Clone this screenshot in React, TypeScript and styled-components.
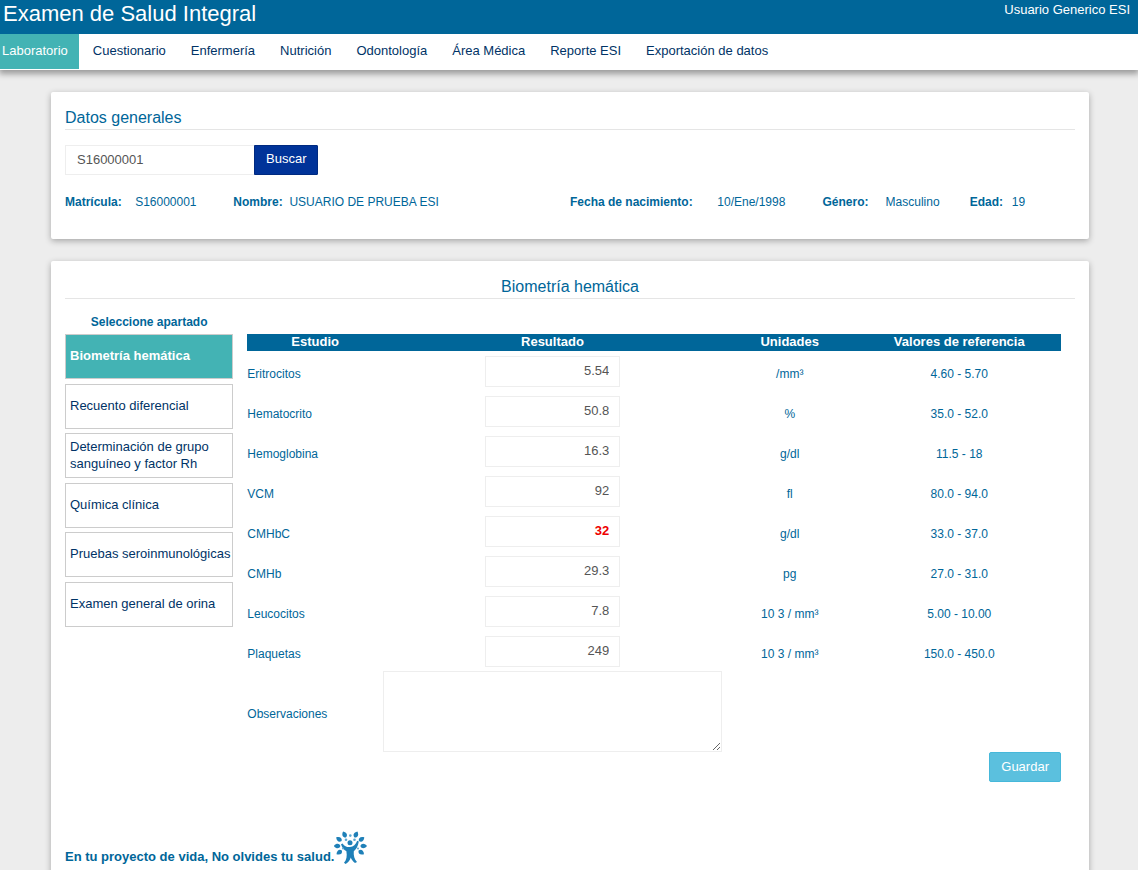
import React from 'react';
import styled, { createGlobalStyle } from 'styled-components';

const GlobalStyle = createGlobalStyle`
  *, *::before, *::after { box-sizing: border-box; }
  body {
    margin: 0;
    background: #ededed;
    color: #006699;
    font-family: Arial, "Liberation Sans", sans-serif;
    font-size: 12px;
    line-height: 17px;
  }
  button, input, textarea { font: inherit; }
`;

const Header = styled.header`
  position: relative;
  z-index: 1;
  display: flex;
  justify-content: space-between;
  height: 34px;
  padding: 0 8px 0 3px;
  background: #006699;
  color: #fff;
`;

const SiteTitle = styled.h1`
  margin: 0;
  font-size: 22px;
  font-weight: 400;
  line-height: 28px;
`;

const UserName = styled.span`
  font-size: 13px;
  line-height: 20px;
`;

const Nav = styled.nav`
  display: flex;
  height: 36px;
  background: #fff;
  box-shadow: 0 3px 6px 1px rgba(0, 0, 0, 0.35);
`;

const NavLink = styled.a<{ $active?: boolean }>`
  height: 35px;
  padding: 0 11px 0 ${p => (p.$active ? 2 : 14)}px;
  background: ${p => (p.$active ? '#43b3b4' : 'transparent')};
  color: ${p => (p.$active ? '#fff' : '#003366')};
  font-size: 13px;
  line-height: 34px;
  text-decoration: none;
  white-space: nowrap;
`;

const Main = styled.main`
  display: flex;
  flex-direction: column;
  gap: 22px;
  padding: 22px 49px 22px 51px;
`;

const Card = styled.section`
  padding: 14px 14px 28px;
  background: #fff;
  border-radius: 2px;
  box-shadow: 0 2px 6px rgba(0, 0, 0, 0.3);
`;

const CardTitle = styled.h2<{ $centered?: boolean }>`
  margin: 0 0 15px;
  padding-top: 1px;
  border-bottom: 1px solid #e5e5e5;
  font-size: 16px;
  font-weight: 400;
  line-height: 22px;
  text-align: ${p => (p.$centered ? 'center' : 'left')};
`;

const SearchForm = styled.form`
  display: flex;
  height: 30px;
  margin-bottom: 19px;
`;

const SearchInput = styled.input`
  width: 189px;
  padding: 0 11px 2px;
  border: 1px solid #eee;
  border-right: 0;
  color: #555;
  font-size: 13px;
`;

const Button = styled.button<{ $primary?: boolean }>`
  height: 30px;
  padding: 0 11px ${p => (p.$primary ? 3 : 2)}px;
  border: 1px solid ${p => (p.$primary ? '#002a80' : '#46b8da')};
  border-radius: ${p => (p.$primary ? '0 1px 1px 0' : '2px')};
  background: ${p => (p.$primary ? '#003399' : '#5bc0de')};
  color: #fff;
  font-size: 13px;
  cursor: pointer;
`;

const PatientData = styled.dl`
  display: grid;
  grid-template-columns: 8fr 16fr 12fr 7fr 5fr;
  margin: 0;
`;

const Datum = styled.div<{ $split: string }>`
  display: grid;
  grid-template-columns: ${p => p.$split};
  white-space: nowrap;
`;

const Term = styled.dt`
  font-weight: 700;
`;

const Detail = styled.dd`
  margin: 0;
`;

const Workspace = styled.div`
  display: grid;
  grid-template-columns: 2fr 10fr;
`;

const SectionNav = styled.nav`
  text-align: center;
`;

const SectionHeading = styled.h3`
  margin: 0 0 3px;
  font-size: 12px;
  line-height: 17px;
`;

const SectionList = styled.ul`
  display: flex;
  flex-direction: column;
  justify-content: space-between;
  height: 293px;
  margin: 0;
  padding: 0;
  list-style: none;
`;

const SectionLink = styled.a<{ $active?: boolean }>`
  display: flex;
  align-items: center;
  height: 45px;
  padding: 0 0 2px 4px;
  border: 1px solid #ccc;
  background: ${p => (p.$active ? '#43b3b4' : '#fff')};
  color: ${p => (p.$active ? '#fff' : '#003366')};
  font-size: 13px;
  font-weight: ${p => (p.$active ? 700 : 400)};
  text-align: left;
  text-decoration: none;
`;

const Results = styled.form`
  padding: 20px 14px 0;
  text-align: right;
`;

const ResultsTable = styled.table`
  width: 100%;
  border-collapse: collapse;
  table-layout: fixed;
  text-align: center;
`;

const HeadCell = styled.th<{ $width: string }>`
  width: ${p => p.$width};
  height: 17px;
  padding: 0 0 2px;
  background: #006699;
  color: #fff;
  font-size: 13px;
  line-height: 15px;
`;

const StudyCell = styled.th`
  padding: 6px 0 0;
  font-weight: 400;
  text-align: left;
`;

const Cell = styled.td`
  height: 40px;
  padding: 6px 0 0;
`;

const InputCell = styled.td<{ $flush?: boolean }>`
  padding: ${p => (p.$flush ? 0 : 5)}px 0 0;
  vertical-align: top;
`;

const ResultInput = styled.input<{ $alert?: boolean }>`
  display: block;
  width: 40%;
  height: 31px;
  margin: 0 auto;
  padding: 0 10px 2px;
  border: 1px solid #eee;
  color: ${p => (p.$alert ? '#ee0000' : '#555')};
  font-size: 13px;
  font-weight: ${p => (p.$alert ? 700 : 400)};
  text-align: right;
`;

const Notes = styled.textarea`
  display: block;
  width: 100%;
  height: 81px;
  padding: 6px 11px;
  border: 1px solid #eee;
  color: #555;
  font-size: 13px;
  resize: both;
`;

const Motto = styled.footer`
  display: flex;
  align-items: flex-end;
  margin-top: 49px;
  font-size: 13px;
  font-weight: 700;
`;

const navItems = [
  'Laboratorio', 'Cuestionario', 'Enfermería', 'Nutrición',
  'Odontología', 'Área Médica', 'Reporte ESI', 'Exportación de datos',
];

const patient = [
  { term: 'Matrícula:', detail: 'S16000001', split: '5fr 7fr' },
  { term: 'Nombre:', detail: 'USUARIO DE PRUEBA ESI', split: '2fr 10fr' },
  { term: 'Fecha de nacimiento:', detail: '10/Ene/1998', split: '7fr 5fr' },
  { term: 'Género:', detail: 'Masculino', split: '3fr 4fr' },
  { term: 'Edad:', detail: '19', split: '2fr 3fr' },
];

const sections = [
  'Biometría hemática', 'Recuento diferencial',
  'Determinación de grupo sanguíneo y factor Rh', 'Química clínica',
  'Pruebas seroinmunológicas', 'Examen general de orina',
];

const studies = [
  { name: 'Eritrocitos', value: '5.54', unit: '/mm³', range: '4.60 - 5.70' },
  { name: 'Hematocrito', value: '50.8', unit: '%', range: '35.0 - 52.0' },
  { name: 'Hemoglobina', value: '16.3', unit: 'g/dl', range: '11.5 - 18' },
  { name: 'VCM', value: '92', unit: 'fl', range: '80.0 - 94.0' },
  { name: 'CMHbC', value: '32', unit: 'g/dl', range: '33.0 - 37.0', alert: true },
  { name: 'CMHb', value: '29.3', unit: 'pg', range: '27.0 - 31.0' },
  { name: 'Leucocitos', value: '7.8', unit: '10 3 / mm³', range: '5.00 - 10.00' },
  { name: 'Plaquetas', value: '249', unit: '10 3 / mm³', range: '150.0 - 450.0' },
];

/* Leaf positions around the figure: x, y, rotation */
const leaves = [
  [10.5, 3.6, -25], [22, 3.6, 25], [5, 8.2, -55], [27.5, 8.2, 55],
  [3.2, 15, -90], [29.6, 15, 90], [5.3, 21.3, -125], [27.2, 21.3, 125],
];

const Emblem = () => (
  <svg width="33" height="34" viewBox="0 0 33 34" aria-hidden="true">
    <g fill="#1f80b8">
      {leaves.map(([x, y, r]) => (
        <path
          key={`${x}-${y}`}
          d="M0-3.4C3.2-.8 2.8 2.2 0 3.2C-2.8 2.2-3.2-.8 0-3.4Z"
          transform={`translate(${x} ${y}) rotate(${r})`}
        />
      ))}
      <circle cx="16" cy="11.8" r="2.5" />
      <path d="M8.6 12.4C10.4 15.4 13 16.2 16 16C19.4 15.8 21.8 13.6 23.2 9.8L24.8 10.6C24 15.4 22.2 18.4 19.8 20.2C19.4 24.5 20.4 28 23 31L21 32C18.8 30 17.4 28.4 16.8 26.4C16 29.2 14.2 31.6 11.6 33L10 31.8C12.6 28.8 13.2 25 12.4 20.2C9.8 18.8 8 16.4 7 13.2Z" />
    </g>
    <g fill="#5da9d2">
      <circle cx="16.3" cy="4.6" r="1.3" />
      <circle cx="12" cy="8.8" r="1.3" />
      <circle cx="20.5" cy="8.8" r="1.3" />
      <circle cx="9" cy="17.6" r="1" />
      <circle cx="24" cy="17.6" r="1" />
    </g>
  </svg>
);

export default function App() {
  return (
    <>
      <GlobalStyle />
      <Header>
        <SiteTitle>Examen de Salud Integral</SiteTitle>
        <UserName>Usuario Generico ESI</UserName>
      </Header>
      <Nav>
        {navItems.map((item, i) => (
          <NavLink key={item} href="#" $active={i === 0}>{item}</NavLink>
        ))}
      </Nav>
      <Main>
        <Card>
          <CardTitle>Datos generales</CardTitle>
          <SearchForm onSubmit={e => e.preventDefault()}>
            <SearchInput aria-label="Matrícula" defaultValue="S16000001" />
            <Button $primary type="submit">Buscar</Button>
          </SearchForm>
          <PatientData>
            {patient.map(p => (
              <Datum key={p.term} $split={p.split}>
                <Term>{p.term}</Term>
                <Detail>{p.detail}</Detail>
              </Datum>
            ))}
          </PatientData>
        </Card>
        <Card>
          <CardTitle $centered>Biometría hemática</CardTitle>
          <Workspace>
            <SectionNav>
              <SectionHeading>Seleccione apartado</SectionHeading>
              <SectionList>
                {sections.map((s, i) => (
                  <li key={s}>
                    <SectionLink href="#" $active={i === 0}>{s}</SectionLink>
                  </li>
                ))}
              </SectionList>
            </SectionNav>
            <Results onSubmit={e => e.preventDefault()}>
              <ResultsTable>
                <thead>
                  <tr>
                    <HeadCell scope="col" $width="calc(100% * 2 / 12)">Estudio</HeadCell>
                    <HeadCell scope="col" $width="calc(100% * 5 / 12)">Resultado</HeadCell>
                    <HeadCell scope="col" $width="calc(100% * 2 / 12)">Unidades</HeadCell>
                    <HeadCell scope="col" $width="25%">Valores de referencia</HeadCell>
                  </tr>
                </thead>
                <tbody>
                  {studies.map(s => (
                    <tr key={s.name}>
                      <StudyCell scope="row"><label htmlFor={s.name}>{s.name}</label></StudyCell>
                      <InputCell>
                        <ResultInput id={s.name} defaultValue={s.value} $alert={s.alert} />
                      </InputCell>
                      <Cell>{s.unit}</Cell>
                      <Cell>{s.range}</Cell>
                    </tr>
                  ))}
                  <tr>
                    <StudyCell scope="row"><label htmlFor="observaciones">Observaciones</label></StudyCell>
                    <InputCell $flush><Notes id="observaciones" /></InputCell>
                    <td colSpan={2} />
                  </tr>
                </tbody>
              </ResultsTable>
              <Button type="submit">Guardar</Button>
            </Results>
          </Workspace>
          <Motto>
            En tu proyecto de vida, No olvides tu salud.
            <Emblem />
          </Motto>
        </Card>
      </Main>
    </>
  );
}
